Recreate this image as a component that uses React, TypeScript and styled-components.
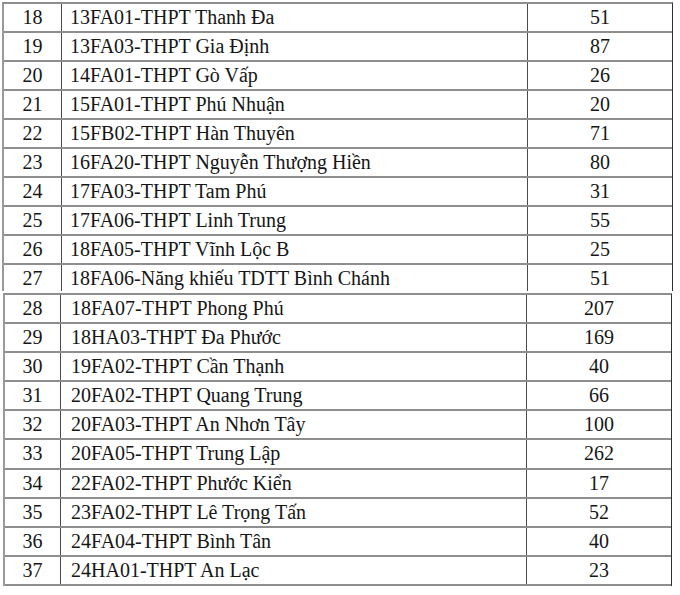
import React from 'react'
import styled, { createGlobalStyle } from 'styled-components'

const GlobalStyle = createGlobalStyle`
  body {
    margin: 0;
    background: #ffffff;
  }
`

interface School {
  no: number
  name: string
  count: number
}

const upper: School[] = [
  { no: 18, name: '13FA01-THPT Thanh Đa', count: 51 },
  { no: 19, name: '13FA03-THPT Gia Định', count: 87 },
  { no: 20, name: '14FA01-THPT Gò Vấp', count: 26 },
  { no: 21, name: '15FA01-THPT Phú Nhuận', count: 20 },
  { no: 22, name: '15FB02-THPT Hàn Thuyên', count: 71 },
  { no: 23, name: '16FA20-THPT Nguyễn Thượng Hiền', count: 80 },
  { no: 24, name: '17FA03-THPT Tam Phú', count: 31 },
  { no: 25, name: '17FA06-THPT Linh Trung', count: 55 },
  { no: 26, name: '18FA05-THPT Vĩnh Lộc B', count: 25 },
  { no: 27, name: '18FA06-Năng khiếu TDTT Bình Chánh', count: 51 },
]

const lower: School[] = [
  { no: 28, name: '18FA07-THPT Phong Phú', count: 207 },
  { no: 29, name: '18HA03-THPT Đa Phước', count: 169 },
  { no: 30, name: '19FA02-THPT Cần Thạnh', count: 40 },
  { no: 31, name: '20FA02-THPT Quang Trung', count: 66 },
  { no: 32, name: '20FA03-THPT An Nhơn Tây', count: 100 },
  { no: 33, name: '20FA05-THPT Trung Lập', count: 262 },
  { no: 34, name: '22FA02-THPT Phước Kiển', count: 17 },
  { no: 35, name: '23FA02-THPT Lê Trọng Tấn', count: 52 },
  { no: 36, name: '24FA04-THPT Bình Tân', count: 40 },
  { no: 37, name: '24HA01-THPT An Lạc', count: 23 },
]

const Page = styled.div`
  padding-top: 2px;
  display: flex;
  flex-direction: column;
  gap: 2px;
  color: #161616;
`

// the table is two scanned pieces stacked, slightly out of line
const Segment = styled.div<{ $left: number; $width: number }>`
  margin-left: ${p => p.$left}px;
  width: ${p => p.$width}px;
  box-sizing: border-box;
  border-top: 2px solid #8e8e8e;
  border-left: 2px solid #9a9a9a;
  border-right: 1px solid #2e2e2e;
`

const Row = styled.div<{ $h: number; $first: number; $open?: boolean }>`
  display: grid;
  grid-template-columns: ${p => p.$first}px 466px 1fr;
  height: ${p => p.$h}px;
  box-sizing: border-box;
  border-bottom: ${p => (p.$open ? 'none' : '2px solid #8e8e8e')};
`

const Cell = styled.div<{ $align: 'left' | 'center'; $indent?: number; $last?: boolean }>`
  display: flex;
  align-items: flex-start;
  justify-content: ${p => (p.$align === 'center' ? 'center' : 'flex-start')};
  padding: 3px 0 0 ${p => p.$indent ?? 0}px;
  border-right: ${p => (p.$last ? 'none' : '1px solid #4a4a4a')};
  font-family: 'Liberation Serif', serif;
  font-size: 20px;
  line-height: 20px;
  white-space: nowrap;
`

interface PartProps {
  rows: School[]
  rowH: number
  first: number
  indent: number
  left: number
  width: number
  cutLast?: number
}

const Part = ({ rows, rowH, first, indent, left, width, cutLast }: PartProps) => (
  <Segment $left={left} $width={width}>
    {rows.map((r, i) => {
      const cut = cutLast !== undefined && i === rows.length - 1
      return (
        <Row key={r.no} $h={cut ? cutLast : rowH} $first={first} $open={cut}>
          <Cell $align="center">{r.no}</Cell>
          <Cell $align="left" $indent={indent}>{r.name}</Cell>
          <Cell $align="center" $last>{r.count}</Cell>
        </Row>
      )
    })}
  </Segment>
)

export default function App() {
  return (
    <>
      <GlobalStyle />
      <Page>
        <Part rows={upper} rowH={29} first={58} indent={8} left={2} width={671} cutLast={26} />
        <Part rows={lower} rowH={29.1} first={56} indent={10} left={3} width={669} />
      </Page>
    </>
  )
}
